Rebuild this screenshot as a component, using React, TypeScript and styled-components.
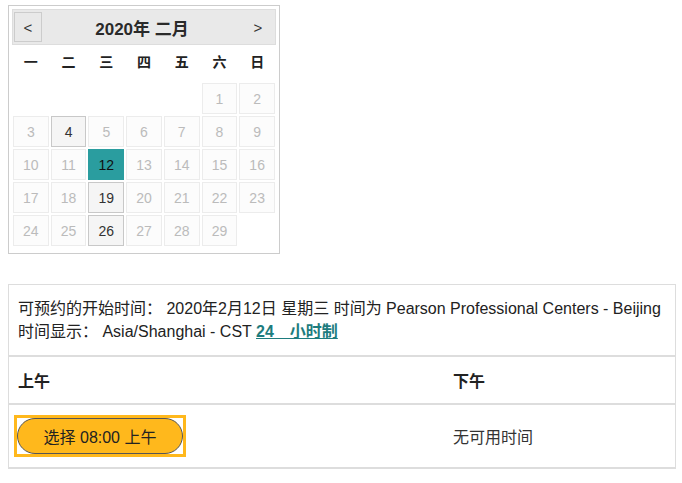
import React, { FC } from "react"
import styled, { createGlobalStyle, css } from "styled-components"

const GlobalStyle = createGlobalStyle`
  body {
    margin: 0;
    background: #fff;
    font-family: "Liberation Sans", "Noto Sans CJK SC", sans-serif;
    color: #333;
  }
`

type DayState = "empty" | "off" | "open" | "selected"

interface DayCell {
  num?: number
  state: DayState
}

const open = [4, 19, 26]
const days: DayCell[] = [
  ...Array.from({ length: 5 }, () => ({ state: "empty" as DayState })),
  ...Array.from({ length: 29 }, (_, i) => {
    const n = i + 1
    const state: DayState = n === 12 ? "selected" : open.includes(n) ? "open" : "off"
    return { num: n, state }
  }),
]

const weekdays = ["一", "二", "三", "四", "五", "六", "日"]

const Page = styled.div`
  padding: 5px 6px 0 8px;
`

const Calendar = styled.div`
  width: 264px;
  border: 1px solid #ccc;
  padding: 3px 3px 7px;
`

const Header = styled.div`
  height: 34px;
  display: flex;
  align-items: center;
  background: #e9e9e9;
  border: 1px solid #ddd;
`

const NavBtn = styled.div<{ $side: "left" | "right" }>`
  width: 26px;
  height: 28px;
  display: flex;
  align-items: center;
  justify-content: center;
  font-size: 15px;
  color: #333;
  ${({ $side }) =>
    $side === "left"
      ? css`
          margin-left: 1px;
          border: 1px solid #ccc;
        `
      : css`
          border: 1px solid transparent;
          margin-right: 3px;
        `}
`

const Title = styled.div`
  flex: 1;
  text-align: center;
  font-size: 17px;
  font-weight: bold;
  color: #2a2a2a;
  padding-right: 2px;
`

const WeekRow = styled.div`
  display: grid;
  grid-template-columns: repeat(7, 1fr);
  column-gap: 2px;
  padding: 0 1px 5px;
  height: 37px;
  box-sizing: border-box;
  align-items: center;
`

const WeekDay = styled.div`
  text-align: center;
  font-size: 14px;
  font-weight: bold;
  color: #222;
  font-family: "Noto Sans CJK SC", sans-serif;
`

const DayGrid = styled.div`
  display: grid;
  grid-template-columns: repeat(7, 1fr);
  grid-auto-rows: 31px;
  gap: 2px;
  padding: 1px 1px 0;
`

const Day = styled.div<{ $state: DayState }>`
  display: flex;
  align-items: center;
  justify-content: center;
  font-size: 14px;
  ${({ $state }) => {
    switch ($state) {
      case "empty":
        return css`
          border: 1px solid transparent;
        `
      case "off":
        return css`
          border: 1px solid #ececec;
          background: #fcfcfc;
          color: #bbb;
        `
      case "open":
        return css`
          border: 1px solid #c8c8c8;
          background: #f5f5f5;
          color: #333;
        `
      case "selected":
        return css`
          border: 1px solid #2a9d9f;
          background: #2a9d9f;
          color: #111;
        `
    }
  }}
`

const Slots = styled.div`
  margin-top: 30px;
  border: 1px solid #ddd;
  border-bottom-width: 2px;
`

const Info = styled.div`
  padding: 12px 9px 12px;
  font-size: 16px;
  line-height: 23px;
  color: #222;
  border-bottom: 2px solid #ddd;
`

const Link = styled.a`
  color: #1d7c7e;
  font-weight: bold;
  text-decoration: underline;
  white-space: pre;
`

const Row = styled.div<{ $last?: boolean }>`
  display: grid;
  grid-template-columns: 435px 1fr;
  align-items: center;
  ${({ $last }) =>
    !$last &&
    css`
      border-bottom: 2px solid #ddd;
    `}
`

const HeadCell = styled.div`
  height: 46px;
  display: flex;
  align-items: center;
  padding: 0 9px;
  font-size: 16px;
  font-weight: bold;
  color: #222;
`

const BodyCell = styled.div`
  height: 62px;
  display: flex;
  align-items: center;
  padding: 0 5px;
  font-size: 16px;
  color: #333;
`

const EmptyNote = styled.span`
  padding-left: 4px;
`

const Focus = styled.div`
  border: 3px solid #ffb81c;
  background: #fff;
`

const SelectBtn = styled.button`
  width: 166px;
  height: 36px;
  border-radius: 18px;
  border: 1px solid #555;
  background: #ffb81c;
  font-family: "Liberation Sans", "Noto Sans CJK SC", sans-serif;
  font-size: 16px;
  color: #222;
  display: block;
  margin: 0;
`

const App: FC = () => {
  return (
    <Page>
      <GlobalStyle />
      <Calendar>
        <Header>
          <NavBtn $side="left">&lt;</NavBtn>
          <Title>2020年 二月</Title>
          <NavBtn $side="right">&gt;</NavBtn>
        </Header>
        <WeekRow>
          {weekdays.map((d) => (
            <WeekDay key={d}>{d}</WeekDay>
          ))}
        </WeekRow>
        <DayGrid>
          {days.map((d, i) => (
            <Day key={i} $state={d.state}>
              {d.num}
            </Day>
          ))}
        </DayGrid>
      </Calendar>

      <Slots>
        <Info>
          可预约的开始时间： 2020年2月12日 星期三 时间为 Pearson Professional Centers - Beijing
          <br />
          时间显示： Asia/Shanghai - CST <Link href="#">{"24　小时制"}</Link>
        </Info>
        <Row>
          <HeadCell>上午</HeadCell>
          <HeadCell>下午</HeadCell>
        </Row>
        <Row $last>
          <BodyCell>
            <Focus>
              <SelectBtn>选择 08:00 上午</SelectBtn>
            </Focus>
          </BodyCell>
          <BodyCell>
            <EmptyNote>无可用时间</EmptyNote>
          </BodyCell>
        </Row>
      </Slots>
    </Page>
  )
}

export default App
